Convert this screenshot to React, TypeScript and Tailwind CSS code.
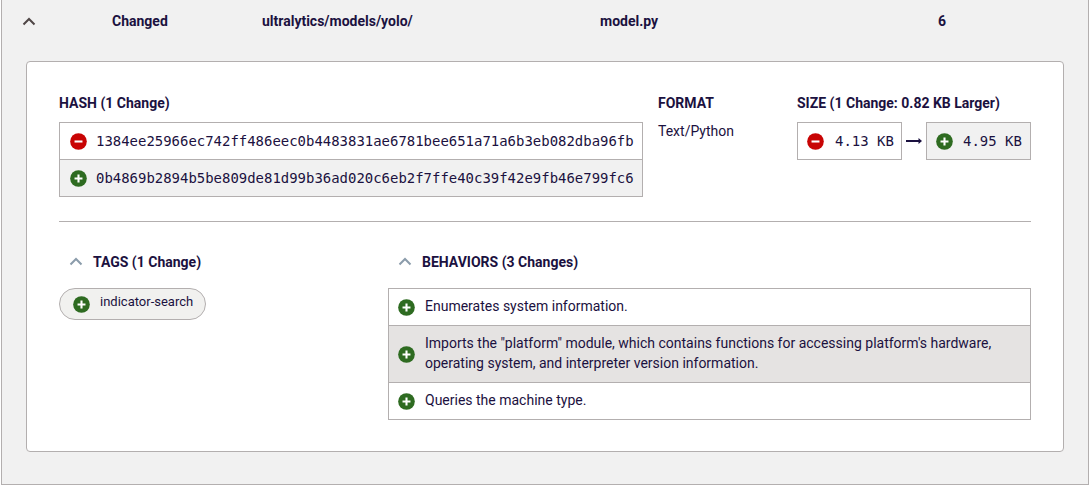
const Plus = () => (
  <svg width="17" height="17" viewBox="0 0 18 18" className="shrink-0">
    <circle cx="9" cy="9" r="8.8" fill="#2e6b21" />
    <path d="M9 4.8v8.4M4.8 9h8.4" stroke="#fff" strokeWidth="2.2" />
  </svg>
);

const Minus = () => (
  <svg width="17" height="17" viewBox="0 0 18 18" className="shrink-0">
    <circle cx="9" cy="9" r="8.8" fill="#c80404" />
    <path d="M4.8 9h8.4" stroke="#fff" strokeWidth="2.2" />
  </svg>
);

const Chevron = ({ className }: { className: string }) => (
  <svg width="14" height="9" viewBox="0 0 14 9" fill="none" className={className}>
    <path d="M1.5 7.5 7 2l5.5 5.5" stroke="currentColor" strokeWidth="2" />
  </svg>
);

const mono = "pt-px font-['DejaVu_Sans_Mono',monospace] text-[13.96px]";

export default function App() {
  return (
    <div className="ml-px h-[485px] w-[1088px] border-x border-b border-[#b3afaf] bg-[#f1f1f1] font-['Roboto',sans-serif] text-sm text-[#1b1140]">
      {/* Header row */}
      <div className="grid h-[42px] grid-cols-[111px_150px_338px_338px_1fr] items-center pl-[20px] font-bold">
        <Chevron className="text-[#4f4646]" />
        <div className="ml-[-21px]">Changed</div>
        <div className="ml-[-21px]">ultralytics/models/yolo/</div>
        <div className="ml-[-21px]">model.py</div>
        <div className="ml-[-21px]">6</div>
      </div>

      <div className="ml-[24px] mt-[19px] h-[391px] w-[1038px] rounded border border-[#b3afaf] bg-white px-8 pt-[32px]">
        <div className="flex">
          {/* Hash */}
          <div className="w-[584px]">
            <div className="mb-[9px] h-[19px] leading-[19px] font-bold">HASH (1 Change)</div>
            <div className="border border-[#b3afaf]">
              <div className="flex h-[37px] items-center gap-[9px] border-b border-[#b3afaf] pl-[10px]">
                <Minus />
                <span className={mono}>1384ee25966ec742ff486eec0b4483831ae6781bee651a71a6b3eb082dba96fb</span>
              </div>
              <div className="flex h-[36px] items-center gap-[9px] bg-[#f1f1f1] pl-[10px]">
                <Plus />
                <span className={mono}>0b4869b2894b5be809de81d99b36ad020c6eb2f7ffe40c39f42e9fb46e799fc6</span>
              </div>
            </div>
          </div>

          {/* Format */}
          <div className="ml-[15px] w-[139px]">
            <div className="mb-[8px] h-[19px] leading-[19px] font-bold">FORMAT</div>
            <div>Text/Python</div>
          </div>

          {/* Size */}
          <div className="w-[234px]">
            <div className="mb-[9px] h-[19px] leading-[19px] font-bold">SIZE (1 Change: 0.82 KB Larger)</div>
            <div className="flex items-center">
              <div className="flex h-[38px] w-[105px] items-center gap-[11px] border border-[#b3afaf] pl-[9px]">
                <Minus />
                <span className={mono}>4.13 KB</span>
              </div>
              <svg width="24" height="10" viewBox="0 0 24 10" fill="none" className="shrink-0">
                <path d="M4 5h14" stroke="#1b1140" strokeWidth="2" />
                <path d="M16.5 2 20 5l-3.5 3z" fill="#1b1140" />
              </svg>
              <div className="flex h-[38px] w-[105px] items-center gap-[10px] border border-[#b3afaf] bg-[#f1f1f1] pl-[9px]">
                <Plus />
                <span className={mono}>4.95 KB</span>
              </div>
            </div>
          </div>
        </div>

        <div className="mt-[24px] border-t border-[#b3afaf]" />

        <div className="mt-[30px] flex">
          {/* Tags */}
          <div className="w-[329px]">
            <div className="flex h-[19px] items-center pl-[10px] font-bold">
              <Chevron className="mr-[10px] text-[#8b9cab]" />
              TAGS (1 Change)
            </div>
            <div className="mt-[17px] inline-flex h-[32px] items-center gap-[10px] rounded-full border border-[#b3afaf] bg-[#f1f1ef] pl-[13px] pr-[12px] text-[13px]">
              <Plus />
              <span className="pb-[3px]">indicator-search</span>
            </div>
          </div>

          {/* Behaviors */}
          <div className="flex-1">
            <div className="flex h-[19px] items-center pl-[10px] font-bold">
              <Chevron className="mr-[10px] text-[#8b9cab]" />
              BEHAVIORS (3 Changes)
            </div>
            <div className="mt-[17px] border border-[#b3afaf]">
              <div className="flex h-[37px] items-center gap-[10px] border-b border-[#b3afaf] pl-[9px]">
                <Plus />
                <span className="pb-[2px]">Enumerates system information.</span>
              </div>
              <div className="flex h-[57px] items-center gap-[10px] border-b border-[#b3afaf] bg-[#e5e3e2] pl-[9px]">
                <Plus />
                <span className="pb-[2px] leading-[20px]">
                  Imports the "platform" module, which contains functions for accessing platform's hardware,
                  <br />
                  operating system, and interpreter version information.
                </span>
              </div>
              <div className="flex h-[36px] items-center gap-[10px] pl-[9px]">
                <Plus />
                <span className="pb-[2px]">Queries the machine type.</span>
              </div>
            </div>
          </div>
        </div>
      </div>
    </div>
  );
}
